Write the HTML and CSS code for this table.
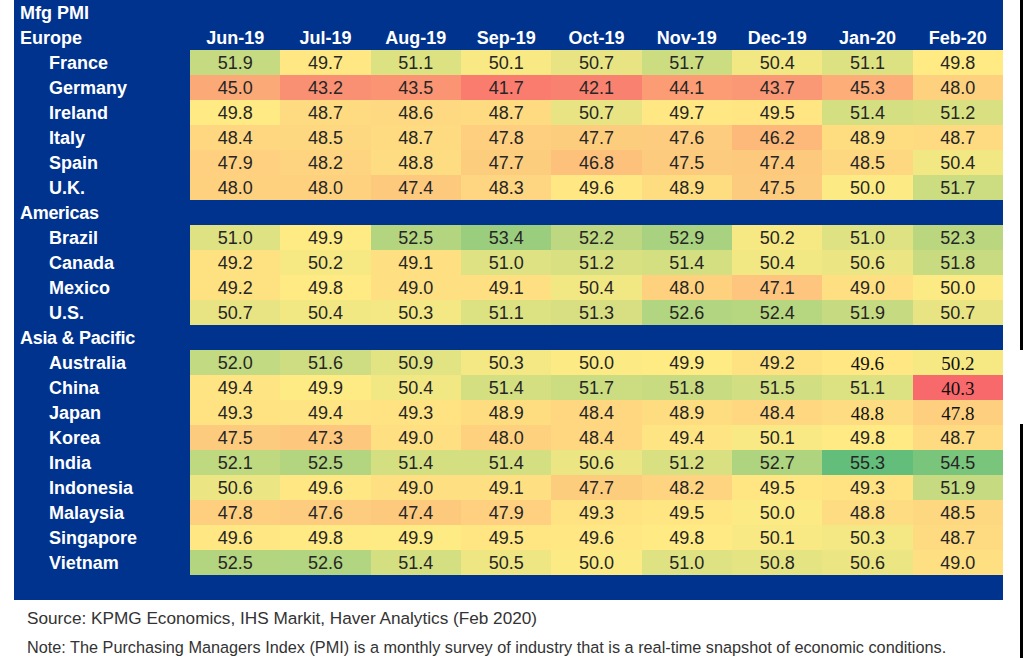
FILE: index.html
```html
<!DOCTYPE html>
<html lang="en">
<head>
<meta charset="utf-8">
<title>Mfg PMI</title>
<link rel="stylesheet" href="styles.css">
</head>
<body>
<div class="page">
  <div class="main">
    <div class="panel">
      <div class="row title"><div class="lbl">Mfg PMI</div></div>
      <div class="row head">
        <div class="lbl">Europe</div>
        <div class="m">Jun-19</div><div class="m">Jul-19</div><div class="m">Aug-19</div><div class="m">Sep-19</div><div class="m">Oct-19</div><div class="m">Nov-19</div><div class="m">Dec-19</div><div class="m">Jan-20</div><div class="m">Feb-20</div>
      </div>
      <div class="row"><div class="lbl ctry">France</div><div class="c" style="--v:51.9">51.9</div><div class="c" style="--v:49.7">49.7</div><div class="c" style="--v:51.1">51.1</div><div class="c" style="--v:50.1">50.1</div><div class="c" style="--v:50.7">50.7</div><div class="c" style="--v:51.7">51.7</div><div class="c" style="--v:50.4">50.4</div><div class="c" style="--v:51.1">51.1</div><div class="c" style="--v:49.8">49.8</div></div>
      <div class="row"><div class="lbl ctry">Germany</div><div class="c" style="--v:45.0">45.0</div><div class="c" style="--v:43.2">43.2</div><div class="c" style="--v:43.5">43.5</div><div class="c" style="--v:41.7">41.7</div><div class="c" style="--v:42.1">42.1</div><div class="c" style="--v:44.1">44.1</div><div class="c" style="--v:43.7">43.7</div><div class="c" style="--v:45.3">45.3</div><div class="c" style="--v:48.0">48.0</div></div>
      <div class="row"><div class="lbl ctry">Ireland</div><div class="c" style="--v:49.8">49.8</div><div class="c" style="--v:48.7">48.7</div><div class="c" style="--v:48.6">48.6</div><div class="c" style="--v:48.7">48.7</div><div class="c" style="--v:50.7">50.7</div><div class="c" style="--v:49.7">49.7</div><div class="c" style="--v:49.5">49.5</div><div class="c" style="--v:51.4">51.4</div><div class="c" style="--v:51.2">51.2</div></div>
      <div class="row"><div class="lbl ctry">Italy</div><div class="c" style="--v:48.4">48.4</div><div class="c" style="--v:48.5">48.5</div><div class="c" style="--v:48.7">48.7</div><div class="c" style="--v:47.8">47.8</div><div class="c" style="--v:47.7">47.7</div><div class="c" style="--v:47.6">47.6</div><div class="c" style="--v:46.2">46.2</div><div class="c" style="--v:48.9">48.9</div><div class="c" style="--v:48.7">48.7</div></div>
      <div class="row"><div class="lbl ctry">Spain</div><div class="c" style="--v:47.9">47.9</div><div class="c" style="--v:48.2">48.2</div><div class="c" style="--v:48.8">48.8</div><div class="c" style="--v:47.7">47.7</div><div class="c" style="--v:46.8">46.8</div><div class="c" style="--v:47.5">47.5</div><div class="c" style="--v:47.4">47.4</div><div class="c" style="--v:48.5">48.5</div><div class="c" style="--v:50.4">50.4</div></div>
      <div class="row"><div class="lbl ctry">U.K.</div><div class="c" style="--v:48.0">48.0</div><div class="c" style="--v:48.0">48.0</div><div class="c" style="--v:47.4">47.4</div><div class="c" style="--v:48.3">48.3</div><div class="c" style="--v:49.6">49.6</div><div class="c" style="--v:48.9">48.9</div><div class="c" style="--v:47.5">47.5</div><div class="c" style="--v:50.0">50.0</div><div class="c" style="--v:51.7">51.7</div></div>
      <div class="row region"><div class="lbl">Americas</div></div>
      <div class="row"><div class="lbl ctry">Brazil</div><div class="c" style="--v:51.0">51.0</div><div class="c" style="--v:49.9">49.9</div><div class="c" style="--v:52.5">52.5</div><div class="c" style="--v:53.4">53.4</div><div class="c" style="--v:52.2">52.2</div><div class="c" style="--v:52.9">52.9</div><div class="c" style="--v:50.2">50.2</div><div class="c" style="--v:51.0">51.0</div><div class="c" style="--v:52.3">52.3</div></div>
      <div class="row"><div class="lbl ctry">Canada</div><div class="c" style="--v:49.2">49.2</div><div class="c" style="--v:50.2">50.2</div><div class="c" style="--v:49.1">49.1</div><div class="c" style="--v:51.0">51.0</div><div class="c" style="--v:51.2">51.2</div><div class="c" style="--v:51.4">51.4</div><div class="c" style="--v:50.4">50.4</div><div class="c" style="--v:50.6">50.6</div><div class="c" style="--v:51.8">51.8</div></div>
      <div class="row"><div class="lbl ctry">Mexico</div><div class="c" style="--v:49.2">49.2</div><div class="c" style="--v:49.8">49.8</div><div class="c" style="--v:49.0">49.0</div><div class="c" style="--v:49.1">49.1</div><div class="c" style="--v:50.4">50.4</div><div class="c" style="--v:48.0">48.0</div><div class="c" style="--v:47.1">47.1</div><div class="c" style="--v:49.0">49.0</div><div class="c" style="--v:50.0">50.0</div></div>
      <div class="row"><div class="lbl ctry">U.S.</div><div class="c" style="--v:50.7">50.7</div><div class="c" style="--v:50.4">50.4</div><div class="c" style="--v:50.3">50.3</div><div class="c" style="--v:51.1">51.1</div><div class="c" style="--v:51.3">51.3</div><div class="c" style="--v:52.6">52.6</div><div class="c" style="--v:52.4">52.4</div><div class="c" style="--v:51.9">51.9</div><div class="c" style="--v:50.7">50.7</div></div>
      <div class="row region"><div class="lbl">Asia &amp; Pacific</div></div>
      <div class="row"><div class="lbl ctry">Australia</div><div class="c" style="--v:52.0">52.0</div><div class="c" style="--v:51.6">51.6</div><div class="c" style="--v:50.9">50.9</div><div class="c" style="--v:50.3">50.3</div><div class="c" style="--v:50.0">50.0</div><div class="c" style="--v:49.9">49.9</div><div class="c" style="--v:49.2">49.2</div><div class="c serif" style="--v:49.6">49.6</div><div class="c serif" style="--v:50.2">50.2</div></div>
      <div class="row"><div class="lbl ctry">China</div><div class="c" style="--v:49.4">49.4</div><div class="c" style="--v:49.9">49.9</div><div class="c" style="--v:50.4">50.4</div><div class="c" style="--v:51.4">51.4</div><div class="c" style="--v:51.7">51.7</div><div class="c" style="--v:51.8">51.8</div><div class="c" style="--v:51.5">51.5</div><div class="c" style="--v:51.1">51.1</div><div class="c serif" style="--v:40.3">40.3</div></div>
      <div class="row"><div class="lbl ctry">Japan</div><div class="c" style="--v:49.3">49.3</div><div class="c" style="--v:49.4">49.4</div><div class="c" style="--v:49.3">49.3</div><div class="c" style="--v:48.9">48.9</div><div class="c" style="--v:48.4">48.4</div><div class="c" style="--v:48.9">48.9</div><div class="c" style="--v:48.4">48.4</div><div class="c serif" style="--v:48.8">48.8</div><div class="c serif" style="--v:47.8">47.8</div></div>
      <div class="row"><div class="lbl ctry">Korea</div><div class="c" style="--v:47.5">47.5</div><div class="c" style="--v:47.3">47.3</div><div class="c" style="--v:49.0">49.0</div><div class="c" style="--v:48.0">48.0</div><div class="c" style="--v:48.4">48.4</div><div class="c" style="--v:49.4">49.4</div><div class="c" style="--v:50.1">50.1</div><div class="c" style="--v:49.8">49.8</div><div class="c" style="--v:48.7">48.7</div></div>
      <div class="row"><div class="lbl ctry">India</div><div class="c" style="--v:52.1">52.1</div><div class="c" style="--v:52.5">52.5</div><div class="c" style="--v:51.4">51.4</div><div class="c" style="--v:51.4">51.4</div><div class="c" style="--v:50.6">50.6</div><div class="c" style="--v:51.2">51.2</div><div class="c" style="--v:52.7">52.7</div><div class="c" style="--v:55.3">55.3</div><div class="c" style="--v:54.5">54.5</div></div>
      <div class="row"><div class="lbl ctry">Indonesia</div><div class="c" style="--v:50.6">50.6</div><div class="c" style="--v:49.6">49.6</div><div class="c" style="--v:49.0">49.0</div><div class="c" style="--v:49.1">49.1</div><div class="c" style="--v:47.7">47.7</div><div class="c" style="--v:48.2">48.2</div><div class="c" style="--v:49.5">49.5</div><div class="c" style="--v:49.3">49.3</div><div class="c" style="--v:51.9">51.9</div></div>
      <div class="row"><div class="lbl ctry">Malaysia</div><div class="c" style="--v:47.8">47.8</div><div class="c" style="--v:47.6">47.6</div><div class="c" style="--v:47.4">47.4</div><div class="c" style="--v:47.9">47.9</div><div class="c" style="--v:49.3">49.3</div><div class="c" style="--v:49.5">49.5</div><div class="c" style="--v:50.0">50.0</div><div class="c" style="--v:48.8">48.8</div><div class="c" style="--v:48.5">48.5</div></div>
      <div class="row"><div class="lbl ctry">Singapore</div><div class="c" style="--v:49.6">49.6</div><div class="c" style="--v:49.8">49.8</div><div class="c" style="--v:49.9">49.9</div><div class="c" style="--v:49.5">49.5</div><div class="c" style="--v:49.6">49.6</div><div class="c" style="--v:49.8">49.8</div><div class="c" style="--v:50.1">50.1</div><div class="c" style="--v:50.3">50.3</div><div class="c" style="--v:48.7">48.7</div></div>
      <div class="row"><div class="lbl ctry">Vietnam</div><div class="c" style="--v:52.5">52.5</div><div class="c" style="--v:52.6">52.6</div><div class="c" style="--v:51.4">51.4</div><div class="c" style="--v:50.5">50.5</div><div class="c" style="--v:50.0">50.0</div><div class="c" style="--v:51.0">51.0</div><div class="c" style="--v:50.8">50.8</div><div class="c" style="--v:50.6">50.6</div><div class="c" style="--v:49.0">49.0</div></div>
    </div>
    <div class="notes">
      <p class="source">Source: KPMG Economics, IHS Markit, Haver Analytics (Feb 2020)</p>
      <p class="note">Note: The Purchasing Managers Index (PMI) is a monthly survey of industry that is a real-time snapshot of economic conditions.</p>
    </div>
  </div>
  <div class="edge">
    <div class="seg seg-top"></div>
    <div class="gap"></div>
    <div class="seg seg-bottom"></div>
  </div>
</div>
</body>
</html>
```

FILE: styles.css
```css
html, body {
  margin: 0;
  padding: 0;
  background: #ffffff;
}

body {
  width: 1024px;
  height: 658px;
  overflow: hidden;
  font-family: "Liberation Sans", Arial, sans-serif;
}

.page {
  display: flex;
  height: 658px;
}

.main {
  display: flex;
  flex-direction: column;
  margin-left: 14px;
  width: 989px;
}

.panel {
  background: #00338d;
  padding-bottom: 25px;
}

.row {
  display: grid;
  grid-template-columns: 176px repeat(9, 1fr);
  height: 25px;
}

.row > div {
  box-sizing: border-box;
  height: 25px;
  padding-top: 1px;
  line-height: 25px;
  white-space: nowrap;
}

.lbl {
  color: #ffffff;
  font-weight: bold;
  font-size: 18px;
  padding-left: 6px;
}

.lbl.ctry {
  padding-left: 35px;
}

.region .lbl {
  letter-spacing: -0.3px;
}

.m {
  color: #ffffff;
  font-weight: bold;
  font-size: 18px;
  text-align: center;
}

.c {
  --lo: clamp(0, (var(--v) - 40.3) / 9.6, 1);
  --hi: clamp(0, (var(--v) - 49.9) / 5.4, 1);
  background: rgb(
    calc(248 + 7 * var(--lo) - 156 * var(--hi)),
    calc(105 + 130 * var(--lo) - 45 * var(--hi)),
    calc(107 + 25 * var(--lo) - 9 * var(--hi))
  );
  color: #262626;
  font-size: 18px;
  text-align: center;
}

.c.serif {
  font-family: "Liberation Serif", "Times New Roman", serif;
  font-size: 19px;
  color: #111111;
}

.notes {
  margin-top: 4px;
  padding-left: 13px;
}

.notes p {
  margin: 0;
  line-height: 29px;
  color: #333333;
  white-space: nowrap;
}

.notes .source {
  font-size: 17.2px;
}

.notes .note {
  font-size: 16.25px;
}

.edge {
  display: flex;
  flex-direction: column;
  margin-left: 17px;
  width: 3px;
}

.seg {
  background: #000000;
}

.seg-top {
  height: 350px;
}

.gap {
  height: 74px;
}

.seg-bottom {
  flex: 1;
}
```
